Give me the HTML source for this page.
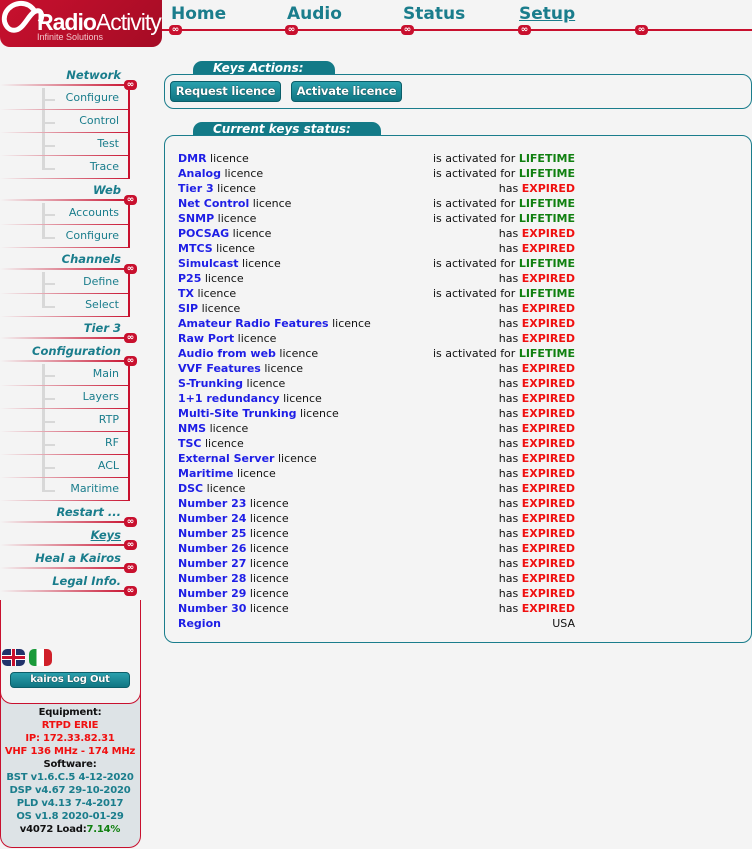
<!DOCTYPE html>
<html><head><meta charset="utf-8"><style>
*{margin:0;padding:0;box-sizing:border-box}
body{width:752px;height:849px;background:#f4f4f4;font-family:"DejaVu Sans",Verdana,"Liberation Sans",sans-serif;font-size:11px;position:relative;overflow:hidden}
.a{position:absolute}
.logo{left:0;top:0;width:162px;height:47px;background:linear-gradient(135deg,#c8102e,#a50c25);border-radius:0 0 10px 10px}
.nav{font-weight:bold;font-size:17px;color:#1a7d8c;top:4px}
.inf{width:13px;height:10px;background:#c8102e;border-radius:4px;color:#fff;font-size:9px;line-height:10px;text-align:center;font-weight:bold}
.hdr{right:631px;font-weight:bold;font-style:italic;color:#1a7d8c;font-size:11.5px;white-space:nowrap}
.hl{left:0;width:130px;height:2px;background:linear-gradient(90deg,#f4f4f4,#c8102e)}
.sub{left:0;width:130px;text-align:right;padding-right:9px;color:#1a7d8c;font-size:11px;height:23px;line-height:22px;border-right:2px solid #c8102e}
.subl{left:0;width:130px;height:1px;background:linear-gradient(90deg,#f4f4f4,#c8102e)}
.tree{left:42px;width:3px;background:#d8d8d8}
.tick{left:45px;width:10px;height:2px;background:#d8d8d8}
.box{border:1px solid #1a7d8c;border-radius:10px;background:#f4f4f4}
.tab{background:#137a87;color:#fff;font-weight:bold;font-style:italic;font-size:12px;border-radius:9px 9px 0 0;padding-left:20px;height:14px;line-height:14px}
.btn{background:linear-gradient(#2aa0ad,#107582);color:#fff;font-weight:bold;font-size:11.5px;letter-spacing:-0.2px;border-radius:4px;border:1px solid #0b5e69;height:21px;line-height:19px;text-align:center;white-space:nowrap;text-shadow:0 0 1px #000}
.r{left:178px;height:15px;line-height:15px;white-space:nowrap;color:#111}
.r b{color:#1e1ee6}
.s{right:177px;height:15px;line-height:15px;white-space:nowrap;color:#111}
.L{color:#108010;font-weight:bold}.E{color:#f01010;font-weight:bold}
.pan{text-align:center;font-weight:bold;font-size:10px;line-height:13px;width:140px;left:0;white-space:nowrap;letter-spacing:-0.2px}
</style></head><body>
<div class="a logo"></div>
<svg class="a" style="left:0;top:0" width="50" height="40"><path d="M34 10 C26 0 12 2 6 12 C1 22 8 32 16 30 C24 28 28 16 34 12 C40 8 44 14 40 22" fill="none" stroke="#fff" stroke-width="5"/></svg>
<div class="a" style="left:37px;top:9px;color:#fff;font-size:23px;font-family:'Liberation Sans',sans-serif;letter-spacing:-1px"><b>Radio</b>Activity</div>
<div class="a" style="left:37px;top:32px;color:#f2c6cc;font-size:9px;font-family:'Liberation Sans',sans-serif">Infinite Solutions</div>
<div class="a" style="left:162px;top:29px;width:590px;height:2px;background:#c8102e"></div>
<div class="a nav" style="left:171px">Home</div>
<div class="a nav" style="left:287px">Audio</div>
<div class="a nav" style="left:403px">Status</div>
<div class="a nav" style="left:519px;text-decoration:underline">Setup</div>
<div class="a inf" style="left:169px;top:25px">∞</div><div class="a inf" style="left:285px;top:25px">∞</div><div class="a inf" style="left:401px;top:25px">∞</div><div class="a inf" style="left:518px;top:25px">∞</div><div class="a inf" style="left:635px;top:25px">∞</div>

<div class="a tree" style="top:88px;height:82px"></div>
<div class="a tree" style="top:203px;height:36px"></div>
<div class="a tree" style="top:272px;height:36px"></div>
<div class="a tree" style="top:364px;height:128px"></div>
<div class="a tick" style="top:99px"></div><div class="a tick" style="top:122px"></div><div class="a tick" style="top:145px"></div><div class="a tick" style="top:168px"></div>
<div class="a tick" style="top:214px"></div><div class="a tick" style="top:237px"></div>
<div class="a tick" style="top:283px"></div><div class="a tick" style="top:306px"></div>
<div class="a tick" style="top:375px"></div><div class="a tick" style="top:398px"></div><div class="a tick" style="top:421px"></div><div class="a tick" style="top:444px"></div><div class="a tick" style="top:467px"></div><div class="a tick" style="top:490px"></div>

<div class="a hdr" style="top:68px">Network</div><div class="a hl" style="top:84px"></div><div class="a inf" style="left:124px;top:80px">∞</div>
<div class="a sub" style="top:87px">Configure</div><div class="a subl" style="top:109px"></div>
<div class="a sub" style="top:110px">Control</div><div class="a subl" style="top:132px"></div>
<div class="a sub" style="top:133px">Test</div><div class="a subl" style="top:155px"></div>
<div class="a sub" style="top:156px">Trace</div><div class="a subl" style="top:178px"></div>
<div class="a hdr" style="top:183px">Web</div><div class="a hl" style="top:199px"></div><div class="a inf" style="left:124px;top:195px">∞</div>
<div class="a sub" style="top:202px">Accounts</div><div class="a subl" style="top:224px"></div>
<div class="a sub" style="top:225px">Configure</div><div class="a subl" style="top:247px"></div>
<div class="a hdr" style="top:252px">Channels</div><div class="a hl" style="top:268px"></div><div class="a inf" style="left:124px;top:264px">∞</div>
<div class="a sub" style="top:271px">Define</div><div class="a subl" style="top:293px"></div>
<div class="a sub" style="top:294px">Select</div><div class="a subl" style="top:316px"></div>
<div class="a hdr" style="top:321px">Tier 3</div><div class="a hl" style="top:337px"></div><div class="a inf" style="left:124px;top:333px">∞</div>
<div class="a hdr" style="top:344px">Configuration</div><div class="a hl" style="top:360px"></div><div class="a inf" style="left:124px;top:356px">∞</div>
<div class="a sub" style="top:363px">Main</div><div class="a subl" style="top:385px"></div>
<div class="a sub" style="top:386px">Layers</div><div class="a subl" style="top:408px"></div>
<div class="a sub" style="top:409px">RTP</div><div class="a subl" style="top:431px"></div>
<div class="a sub" style="top:432px">RF</div><div class="a subl" style="top:454px"></div>
<div class="a sub" style="top:455px">ACL</div><div class="a subl" style="top:477px"></div>
<div class="a sub" style="top:478px">Maritime</div><div class="a subl" style="top:500px"></div>
<div class="a hdr" style="top:505px">Restart ...</div><div class="a hl" style="top:521px"></div><div class="a inf" style="left:124px;top:517px">∞</div>
<div class="a hdr" style="top:528px;text-decoration:underline">Keys</div><div class="a hl" style="top:544px"></div><div class="a inf" style="left:124px;top:540px">∞</div>
<div class="a hdr" style="top:551px">Heal a Kairos</div><div class="a hl" style="top:567px"></div><div class="a inf" style="left:124px;top:563px">∞</div>
<div class="a hdr" style="top:574px">Legal Info.</div><div class="a hl" style="top:590px"></div><div class="a inf" style="left:124px;top:586px">∞</div>

<div class="a" style="left:0;top:620px;width:141px;height:228px;background:#dde3e6;border:1px solid #c8102e;border-top:none;border-radius:0 0 12px 12px"></div>
<div class="a" style="left:0;top:600px;width:141px;height:104px;background:#f4f4f4;border:1px solid #c8102e;border-top:none;border-radius:0 0 12px 12px"></div>
<div class="a" style="left:2px;top:649px;width:23px;height:17px;border-radius:5px;background:#22336b;overflow:hidden"><div class="a" style="left:9px;top:0;width:5px;height:17px;background:#fff"></div><div class="a" style="left:0;top:6px;width:23px;height:5px;background:#fff"></div><div class="a" style="left:10px;top:0;width:3px;height:17px;background:#c8102e"></div><div class="a" style="left:0;top:7px;width:23px;height:3px;background:#c8102e"></div></div>
<div class="a" style="left:29px;top:649px;width:23px;height:17px;border-radius:5px;overflow:hidden;background:linear-gradient(90deg,#1a9a3a 33%,#fff 33%,#fff 66%,#d0202a 66%)"></div>
<div class="a btn" style="left:10px;top:672px;width:120px;height:16px;line-height:14px;font-size:10px;border-radius:4px">kairos Log Out</div>
<div class="a pan" style="top:706px">
<div style="color:#111">Equipment:</div>
<div style="color:#f01010">RTPD ERIE</div>
<div style="color:#f01010">IP: 172.33.82.31</div>
<div style="color:#f01010">VHF 136 MHz - 174 MHz</div>
<div style="color:#111">Software:</div>
<div style="color:#1a7d8c">BST v1.6.C.5 4-12-2020</div>
<div style="color:#1a7d8c">DSP v4.67 29-10-2020</div>
<div style="color:#1a7d8c">PLD v4.13 7-4-2017</div>
<div style="color:#1a7d8c">OS v1.8 2020-01-29</div>
<div style="color:#111">v4072 Load:<span style="color:#108010">7.14%</span></div>
</div>

<div class="a tab" style="left:193px;top:61px;width:142px">Keys Actions:</div>
<div class="a box" style="left:164px;top:74px;width:588px;height:35px"></div>
<div class="a btn" style="left:170px;top:81px;width:111px">Request licence</div>
<div class="a btn" style="left:291px;top:81px;width:111px">Activate licence</div>

<div class="a tab" style="left:193px;top:122px;width:188px">Current keys status:</div>
<div class="a box" style="left:164px;top:135px;width:588px;height:508px"></div>

<div class="a r" style="top:151px"><b>DMR</b> licence</div><div class="a s" style="top:151px">is activated for <span class="L">LIFETIME</span></div>
<div class="a r" style="top:166px"><b>Analog</b> licence</div><div class="a s" style="top:166px">is activated for <span class="L">LIFETIME</span></div>
<div class="a r" style="top:181px"><b>Tier 3</b> licence</div><div class="a s" style="top:181px">has <span class="E">EXPIRED</span></div>
<div class="a r" style="top:196px"><b>Net Control</b> licence</div><div class="a s" style="top:196px">is activated for <span class="L">LIFETIME</span></div>
<div class="a r" style="top:211px"><b>SNMP</b> licence</div><div class="a s" style="top:211px">is activated for <span class="L">LIFETIME</span></div>
<div class="a r" style="top:226px"><b>POCSAG</b> licence</div><div class="a s" style="top:226px">has <span class="E">EXPIRED</span></div>
<div class="a r" style="top:241px"><b>MTCS</b> licence</div><div class="a s" style="top:241px">has <span class="E">EXPIRED</span></div>
<div class="a r" style="top:256px"><b>Simulcast</b> licence</div><div class="a s" style="top:256px">is activated for <span class="L">LIFETIME</span></div>
<div class="a r" style="top:271px"><b>P25</b> licence</div><div class="a s" style="top:271px">has <span class="E">EXPIRED</span></div>
<div class="a r" style="top:286px"><b>TX</b> licence</div><div class="a s" style="top:286px">is activated for <span class="L">LIFETIME</span></div>
<div class="a r" style="top:301px"><b>SIP</b> licence</div><div class="a s" style="top:301px">has <span class="E">EXPIRED</span></div>
<div class="a r" style="top:316px"><b>Amateur Radio Features</b> licence</div><div class="a s" style="top:316px">has <span class="E">EXPIRED</span></div>
<div class="a r" style="top:331px"><b>Raw Port</b> licence</div><div class="a s" style="top:331px">has <span class="E">EXPIRED</span></div>
<div class="a r" style="top:346px"><b>Audio from web</b> licence</div><div class="a s" style="top:346px">is activated for <span class="L">LIFETIME</span></div>
<div class="a r" style="top:361px"><b>VVF Features</b> licence</div><div class="a s" style="top:361px">has <span class="E">EXPIRED</span></div>
<div class="a r" style="top:376px"><b>S-Trunking</b> licence</div><div class="a s" style="top:376px">has <span class="E">EXPIRED</span></div>
<div class="a r" style="top:391px"><b>1+1 redundancy</b> licence</div><div class="a s" style="top:391px">has <span class="E">EXPIRED</span></div>
<div class="a r" style="top:406px"><b>Multi-Site Trunking</b> licence</div><div class="a s" style="top:406px">has <span class="E">EXPIRED</span></div>
<div class="a r" style="top:421px"><b>NMS</b> licence</div><div class="a s" style="top:421px">has <span class="E">EXPIRED</span></div>
<div class="a r" style="top:436px"><b>TSC</b> licence</div><div class="a s" style="top:436px">has <span class="E">EXPIRED</span></div>
<div class="a r" style="top:451px"><b>External Server</b> licence</div><div class="a s" style="top:451px">has <span class="E">EXPIRED</span></div>
<div class="a r" style="top:466px"><b>Maritime</b> licence</div><div class="a s" style="top:466px">has <span class="E">EXPIRED</span></div>
<div class="a r" style="top:481px"><b>DSC</b> licence</div><div class="a s" style="top:481px">has <span class="E">EXPIRED</span></div>
<div class="a r" style="top:496px"><b>Number 23</b> licence</div><div class="a s" style="top:496px">has <span class="E">EXPIRED</span></div>
<div class="a r" style="top:511px"><b>Number 24</b> licence</div><div class="a s" style="top:511px">has <span class="E">EXPIRED</span></div>
<div class="a r" style="top:526px"><b>Number 25</b> licence</div><div class="a s" style="top:526px">has <span class="E">EXPIRED</span></div>
<div class="a r" style="top:541px"><b>Number 26</b> licence</div><div class="a s" style="top:541px">has <span class="E">EXPIRED</span></div>
<div class="a r" style="top:556px"><b>Number 27</b> licence</div><div class="a s" style="top:556px">has <span class="E">EXPIRED</span></div>
<div class="a r" style="top:571px"><b>Number 28</b> licence</div><div class="a s" style="top:571px">has <span class="E">EXPIRED</span></div>
<div class="a r" style="top:586px"><b>Number 29</b> licence</div><div class="a s" style="top:586px">has <span class="E">EXPIRED</span></div>
<div class="a r" style="top:601px"><b>Number 30</b> licence</div><div class="a s" style="top:601px">has <span class="E">EXPIRED</span></div>
<div class="a r" style="top:616px"><b>Region</b></div><div class="a s" style="top:616px">USA</div>
</body></html>
